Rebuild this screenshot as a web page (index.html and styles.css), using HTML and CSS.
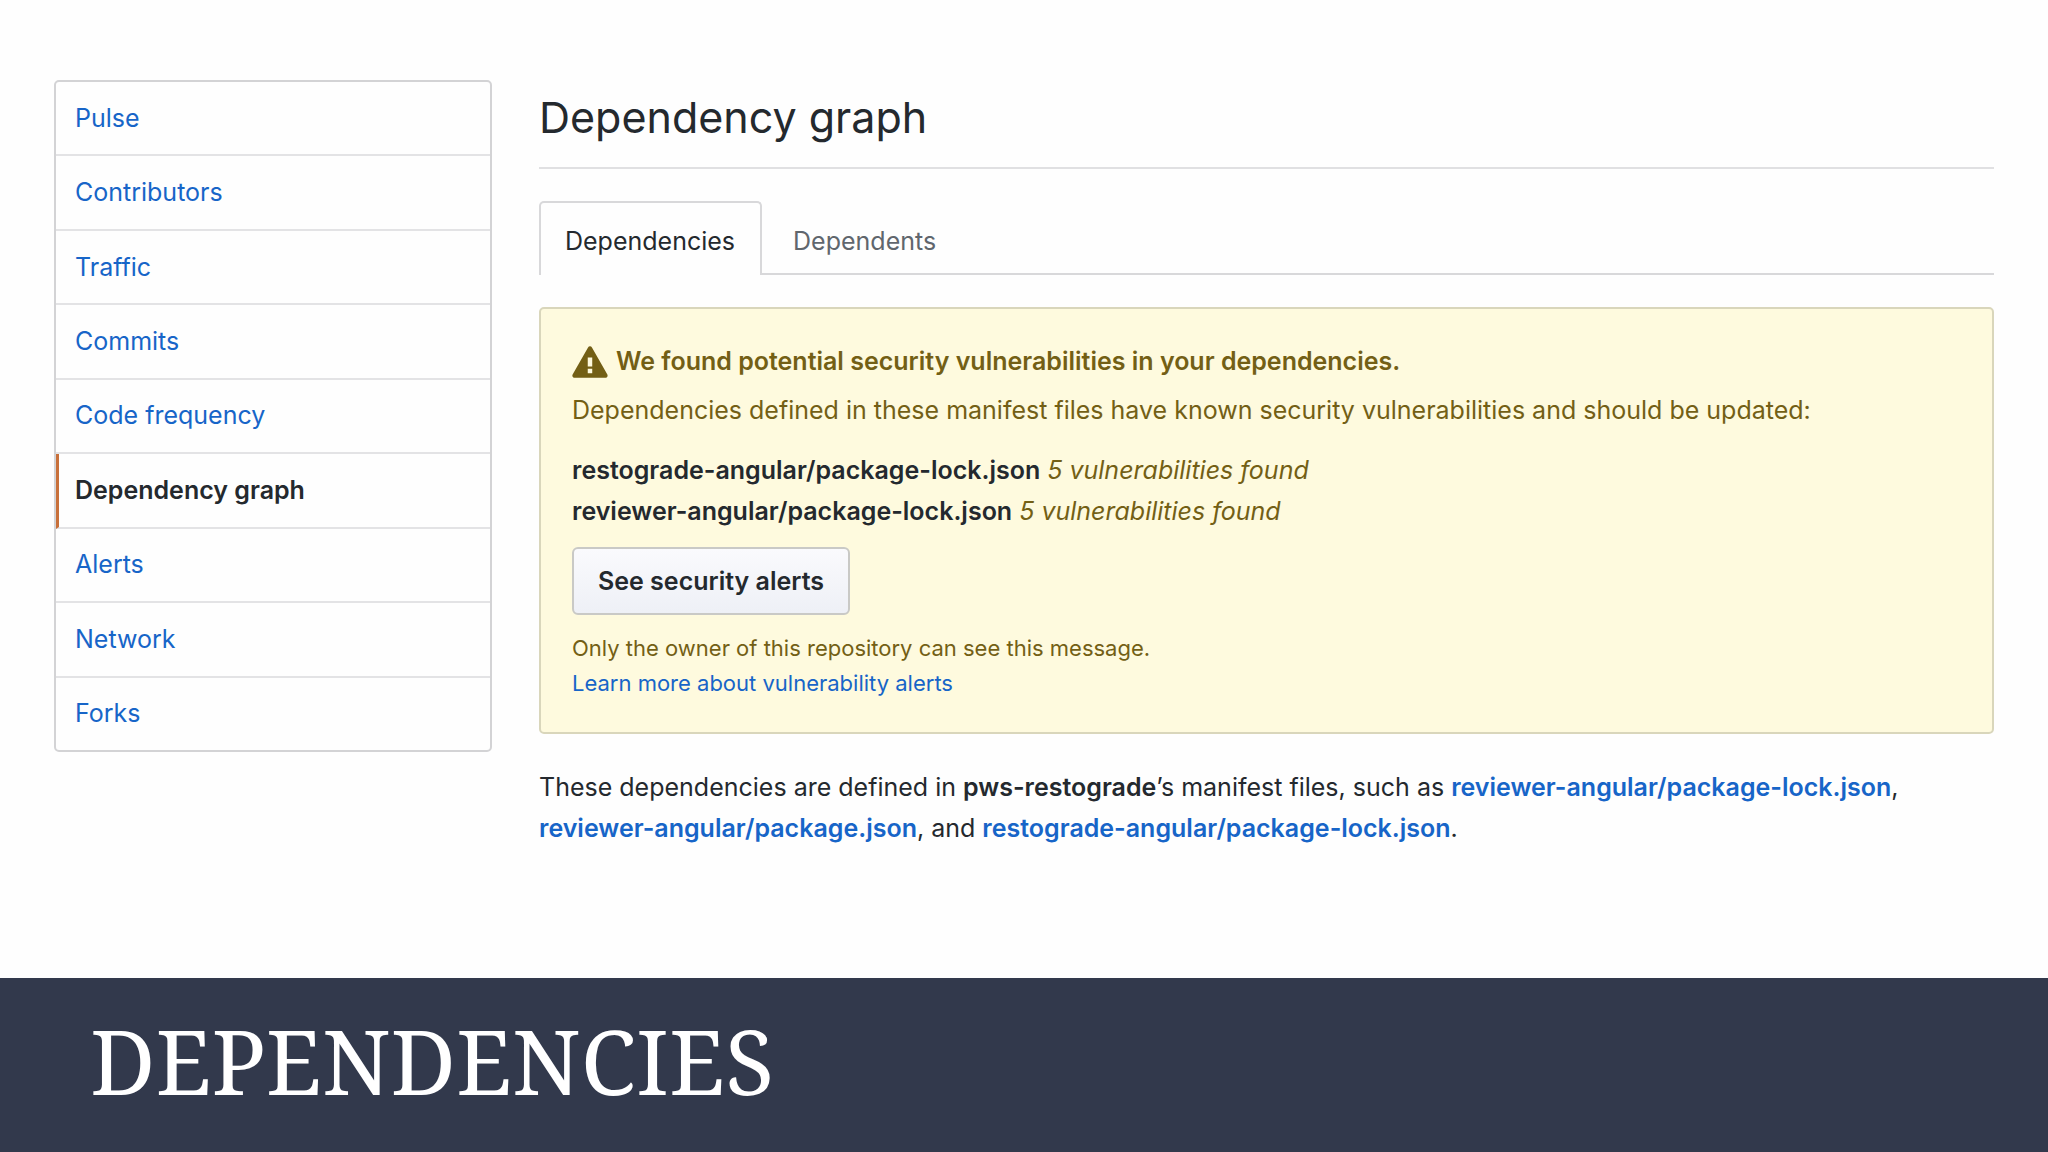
FILE: index.html
```html
<!DOCTYPE html>
<html lang="en">
<head>
  <meta charset="UTF-8">
  <title>Dependencies</title>
  <link rel="stylesheet" href="styles.css">
</head>
<body>

<div class="content">
  <nav class="menu">
    <a href="#">Pulse</a>
    <a href="#">Contributors</a>
    <a href="#">Traffic</a>
    <a href="#">Commits</a>
    <a href="#">Code frequency</a>
    <a href="#" class="selected">Dependency graph</a>
    <a href="#">Alerts</a>
    <a href="#">Network</a>
    <a href="#">Forks</a>
  </nav>

  <main class="main">
    <h1>Dependency graph</h1>
    <div class="tabs">
      <a href="#" class="tab active">Dependencies</a>
      <a href="#" class="tab">Dependents</a>
    </div>

    <section class="flash">
      <h2>
        <svg class="alert-icon" viewBox="0 0 16 16" aria-hidden="true"><path fill-rule="evenodd" d="M8.865 1.52c-.18-.31-.51-.5-.87-.5s-.69.19-.87.5L.275 13.5c-.18.31-.18.69 0 1 .19.31.52.5.87.5h13.7c.36 0 .69-.19.86-.5.17-.31.18-.69.01-1L8.865 1.52zM8.995 13h-2v-2h2v2zm0-3h-2V6h2v4z"/></svg>
        We found potential security vulnerabilities in your dependencies.
      </h2>
      <p class="flash-text">Dependencies defined in these manifest files have known security vulnerabilities and should be updated:</p>
      <ul class="files">
        <li><b>restograde-angular/package-lock.json</b> <i>5 vulnerabilities found</i></li>
        <li><b>reviewer-angular/package-lock.json</b> <i>5 vulnerabilities found</i></li>
      </ul>
      <button type="button" class="btn">See security alerts</button>
      <p class="note">Only the owner of this repository can see this message.<br><a href="#">Learn more about vulnerability alerts</a></p>
    </section>

    <p class="summary">These dependencies are defined in <b>pws-restograde</b>’s manifest files, such as <a href="#">reviewer-angular/package-lock.json</a>, <a href="#">reviewer-angular/package.json</a>, and <a href="#">restograde-angular/package-lock.json</a>.</p>
  </main>
</div>

<footer class="title-bar">DEPENDENCIES</footer>

</body>
</html>
```

FILE: styles.css
```css
* {
  box-sizing: border-box;
}

body {
  margin: 0;
  min-height: 100vh;
  display: flex;
  flex-direction: column;
  background-color: #fefefe;
  color: #24292e;
  font-family: Inter, "Liberation Sans", sans-serif;
  font-size: 25px;
  line-height: 41px;
}

a {
  color: #1765c8;
  text-decoration: none;
}

h1, h2, p, ul {
  margin: 0;
  padding: 0;
}

b, h2 {
  font-weight: 600;
}

.content {
  flex: 1;
  display: flex;
  align-items: flex-start;
  gap: 47px;
  padding: 80px 54px 40px;
}

.menu {
  flex: 0 0 438px;
  min-height: 672px;
  display: flex;
  flex-direction: column;
  border: 2px solid #d3d3d5;
  border-radius: 5px;
}

.menu a {
  flex: 1 0 auto;
  box-sizing: content-box;
  display: flex;
  align-items: center;
  padding: 0 19px;
  border-bottom: 2px solid #e3e3e5;
}

.menu a:last-child {
  border-bottom: none;
}

.menu .selected {
  color: #24292e;
  font-weight: 600;
  padding-left: 16px;
  border-left: 3px solid #c8703a;
}

.main {
  flex: 1;
  min-width: 0;
}

h1 {
  height: 89px;
  font-size: 43px;
  font-weight: 400;
  line-height: 74px;
  border-bottom: 2px solid #e0e0e2;
}

.tabs {
  display: flex;
  margin-top: 32px;
  border-bottom: 2px solid #d8d8da;
}

.tab {
  height: 74px;
  margin-bottom: -2px;
  padding: 0 29px;
  line-height: 76px;
  color: #60666d;
  border: 2px solid transparent;
  border-bottom: none;
}

.tab.active {
  padding: 0 25px 0 24px;
  color: #24292e;
  background-color: #fefefe;
  border-color: #d8d8da;
  border-radius: 5px 5px 0 0;
}

.flash {
  margin-top: 32px;
  padding: 32px 31px 31px;
  color: #735f15;
  background-color: #fefade;
  border: 2px solid #d9d6bb;
  border-radius: 5px;
}

.flash h2 {
  display: flex;
  align-items: center;
  gap: 8px;
  font-size: 25px;
}

.alert-icon {
  width: 36px;
  height: 36px;
  fill: currentColor;
}

.flash-text {
  margin-top: 8px;
}

.files {
  margin: 19px 0 15px;
  list-style: none;
}

.files b {
  color: #24292e;
}

.btn {
  height: 68px;
  padding: 0 24px;
  font: inherit;
  font-weight: 600;
  color: #24292e;
  background: linear-gradient(#fafafd, #eef0f6);
  border: 2px solid #c9c9c6;
  border-radius: 6px;
}

.note {
  margin-top: 16px;
  font-size: 22px;
  line-height: 35px;
}

.summary {
  margin-top: 33px;
}

.summary a {
  font-weight: 600;
}

.title-bar {
  height: 174px;
  padding: 0 90px;
  background-color: #32394c;
  color: #fff;
  font-family: "Noto Serif", "Liberation Serif", serif;
  font-size: 90px;
  line-height: 164px;
}
```
